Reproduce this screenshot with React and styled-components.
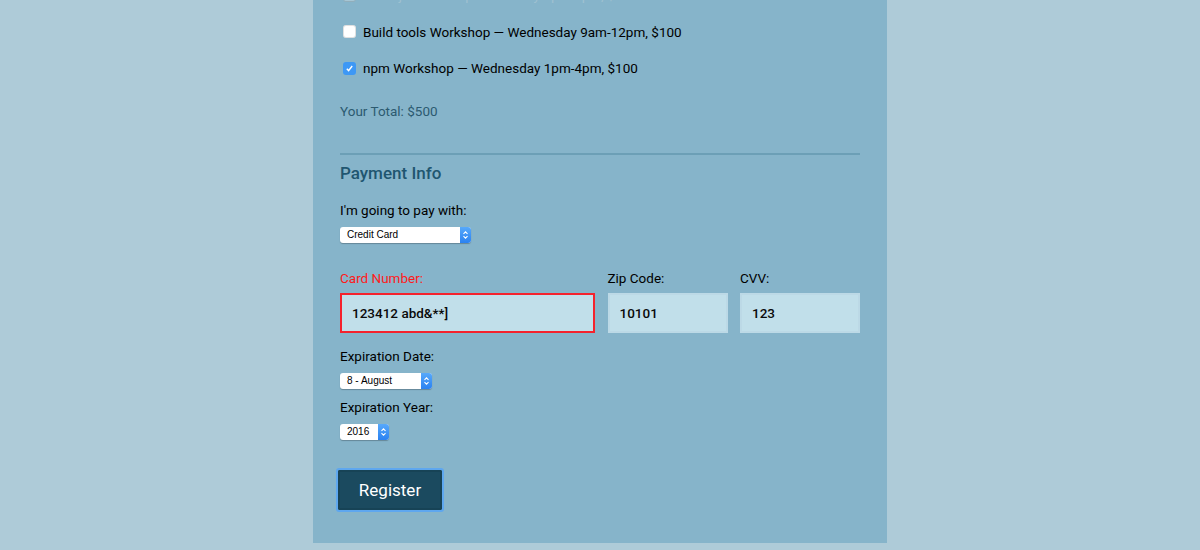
import React from "react";
import styled, { createGlobalStyle } from "styled-components";

const Global = createGlobalStyle`
  html, body { margin: 0; padding: 0; }
  body {
    background: #aecbd8;
    font-family: Roboto, "Liberation Sans", sans-serif;
    overflow: hidden;
    height: 550px;
  }
`;

const Page = styled.div`
  height: 550px;
  overflow: hidden;
`;

const Card = styled.form`
  width: 574px;
  box-sizing: border-box;
  margin: 0 auto;
  background: #86b4ca;
  padding: 0 27px 33px;
`;

const Activities = styled.div`
  display: flex;
  flex-direction: column;
  gap: 16.5px;
  margin-top: -15px;
`;

const CheckRow = styled.label`
  display: flex;
  align-items: center;
  height: 20px;
  gap: 7px;
  padding-left: 3px;
  font-size: 13.5px;
  color: ${(p) => (p.$disabled ? "#9fc1d1" : "#000")};
`;

const Box = styled.span`
  width: 13px;
  height: 13px;
  box-sizing: border-box;
  border-radius: 3px;
  display: inline-flex;
  align-items: center;
  justify-content: center;
  background: ${(p) => (p.$checked ? "#3d98f5" : p.$disabled ? "#a6c6d5" : "#fff")};
  box-shadow: ${(p) => (p.$checked ? "none" : "inset 0 0 0 1px rgba(0,0,0,0.12)")};
`;

const Total = styled.div`
  margin-top: 22.5px;
  font-size: 13.5px;
  line-height: 20px;
  color: #2c5a70;
`;

const Divider = styled.hr`
  margin: 32px 0 0;
  border: none;
  height: 2px;
  background: #6c9fb6;
`;

const Heading = styled.h2`
  margin: 6px 0 0;
  font-size: 17px;
  font-weight: 500;
  line-height: 24px;
  color: #1f5670;
`;

const Label = styled.div`
  margin-top: ${(p) => p.$mt}px;
  font-size: 13.5px;
  line-height: 20px;
  color: ${(p) => (p.$error ? "#ff1a1a" : "#000")};
`;

const Select = styled.div`
  margin-top: 7px;
  width: ${(p) => p.$w}px;
  height: 16px;
  display: flex;
  border-radius: 3px;
  overflow: hidden;
  background: #fff;
  box-shadow: 0 1px 1px rgba(0, 0, 0, 0.25);
  font-family: "Liberation Sans", Arial, sans-serif;
  font-size: 10px;
  color: #000;
`;

const SelectText = styled.span`
  flex: 1;
  padding-left: 7px;
  line-height: 16px;
`;

const SelectArrow = styled.span`
  width: 11px;
  background: linear-gradient(#57a9fb, #2b82f1);
  display: flex;
  align-items: center;
  justify-content: center;
`;

const Row = styled.div`
  display: flex;
  gap: 12.5px;
  margin-top: 25px;
`;

const Field = styled.div`
  display: flex;
  flex-direction: column;
  width: ${(p) => p.$w}px;
`;

const FieldLabel = styled.div`
  font-size: 13.5px;
  line-height: 20px;
  color: ${(p) => (p.$error ? "#ff1a1a" : "#000")};
  margin-bottom: 5px;
`;

const Input = styled.div`
  height: 40px;
  box-sizing: border-box;
  background: #c1dfea;
  border: 2px solid ${(p) => (p.$error ? "#f5222d" : "#bcd9e6")};
  padding: 0 10px;
  display: flex;
  align-items: center;
  font-size: 13.5px;
  font-weight: 500;
  color: #0a0a0a;
`;

const Button = styled.button`
  margin-top: 30px;
  margin-left: -2px;
  width: 104px;
  height: 40px;
  background: #1b4a5f;
  color: #fff;
  border: 2px solid #174356;
  outline: 2px solid #5ea7ef;
  outline-offset: 0;
  border-radius: 1px;
  font-family: Roboto, "Liberation Sans", sans-serif;
  font-size: 17px;
  font-weight: 400;
  display: block;
  padding: 0;
`;

const Arrows = () => (
  <svg width="7" height="10" viewBox="0 0 7 10">
    <path d="M1.5 3.8 L3.5 1.8 L5.5 3.8 M1.5 6.2 L3.5 8.2 L5.5 6.2" fill="none" stroke="#fff" strokeWidth="1.1" />
  </svg>
);

const Check = () => (
  <svg width="9" height="9" viewBox="0 0 9 9">
    <path d="M1.8 4.8 L3.6 6.6 L7.2 2" fill="none" stroke="#fff" strokeWidth="1.4" />
  </svg>
);

export default function App() {
  return (
    <Page>
      <Global />
      <Card>
        <Activities>
          <CheckRow $disabled>
            <Box $disabled />
            Node.js Workshop — Tuesday 1pm-4pm, $100
          </CheckRow>
          <CheckRow>
            <Box />
            Build tools Workshop — Wednesday 9am-12pm, $100
          </CheckRow>
          <CheckRow>
            <Box $checked>
              <Check />
            </Box>
            npm Workshop — Wednesday 1pm-4pm, $100
          </CheckRow>
        </Activities>
        <Total>Your Total: $500</Total>
        <Divider />
        <Heading>Payment Info</Heading>
        <Label $mt={15}>I'm going to pay with:</Label>
        <Select $w={131}>
          <SelectText>Credit Card</SelectText>
          <SelectArrow>
            <Arrows />
          </SelectArrow>
        </Select>
        <Row>
          <Field $w={255}>
            <FieldLabel $error>Card Number:</FieldLabel>
            <Input $error>123412 abd&amp;**]</Input>
          </Field>
          <Field $w={120}>
            <FieldLabel>Zip Code:</FieldLabel>
            <Input>10101</Input>
          </Field>
          <Field $w={120}>
            <FieldLabel>CVV:</FieldLabel>
            <Input>123</Input>
          </Field>
        </Row>
        <Label $mt={13}>Expiration Date:</Label>
        <Select $w={92}>
          <SelectText>8 - August</SelectText>
          <SelectArrow>
            <Arrows />
          </SelectArrow>
        </Select>
        <Label $mt={8}>Expiration Year:</Label>
        <Select $w={49}>
          <SelectText>2016</SelectText>
          <SelectArrow>
            <Arrows />
          </SelectArrow>
        </Select>
        <Button type="button">Register</Button>
      </Card>
    </Page>
  );
}
